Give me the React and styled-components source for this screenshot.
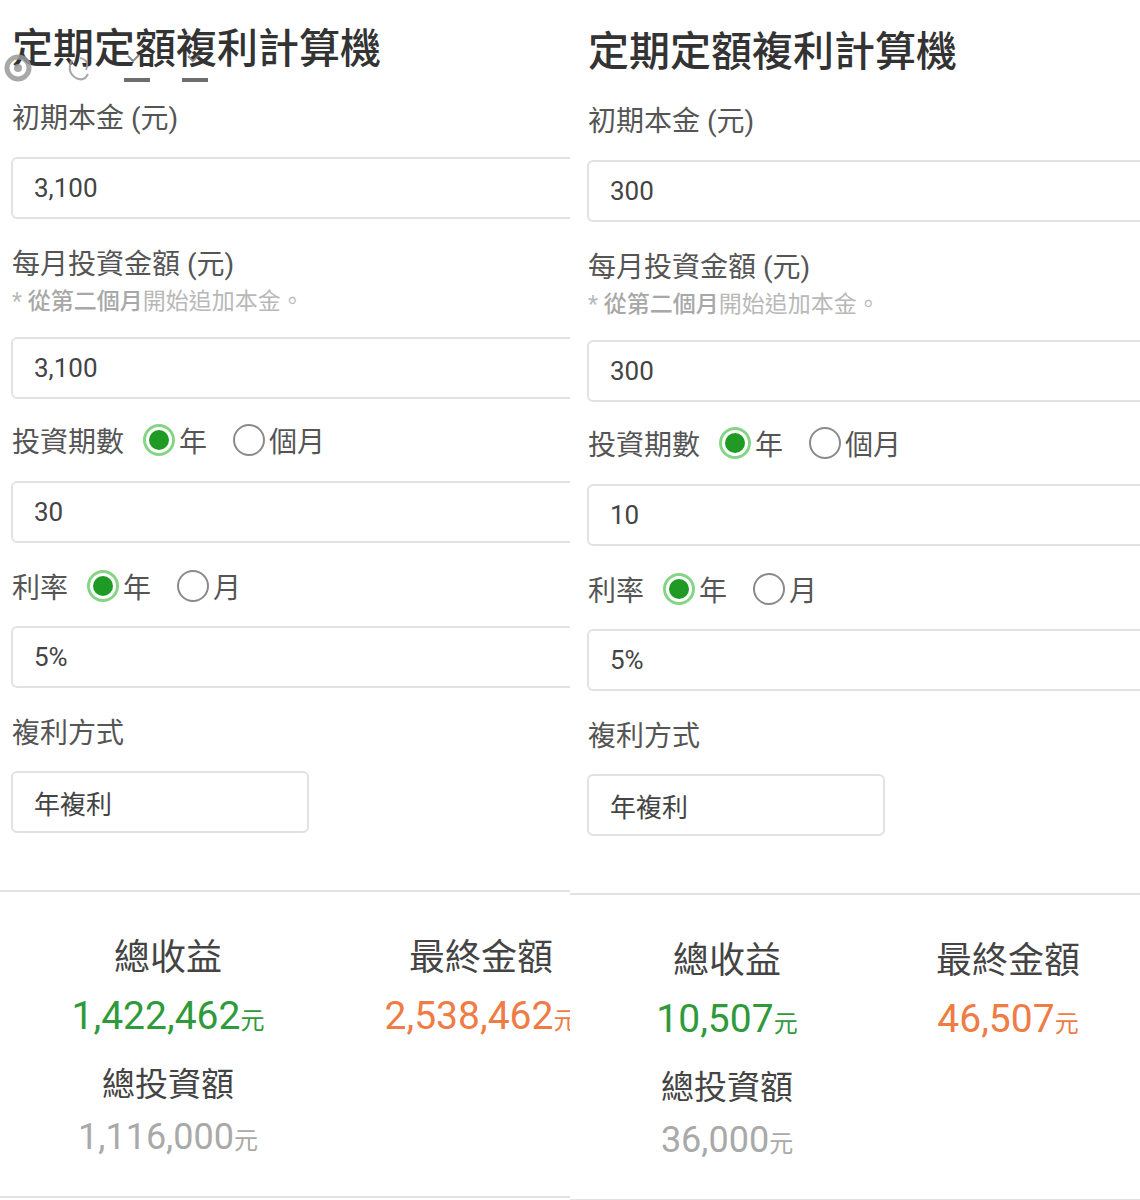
import React from "react";
import styled, { createGlobalStyle } from "styled-components";

const GlobalStyle = createGlobalStyle`
  html, body {
    margin: 0;
    padding: 0;
    background: #fff;
  }
  body {
    font-family: Roboto, "Noto Sans CJK TC", "Noto Sans", sans-serif;
    color: #444;
  }
`;

const panels = [
  {
    id: "a",
    shift: 0,
    inset: 11,
    principal: "3,100",
    monthly: "3,100",
    periods: "30",
    rate: "5%",
    gain: "1,422,462",
    final: "2,538,462",
    invested: "1,116,000",
    cols: "336px 290px",
    overlay: true,
  },
  {
    id: "b",
    shift: 3,
    inset: 17,
    principal: "300",
    monthly: "300",
    periods: "10",
    rate: "5%",
    gain: "10,507",
    final: "46,507",
    invested: "36,000",
    cols: "314px 248px",
    overlay: false,
  },
];

const Calculator = ({ data }) => (
  <Panel $shift={data.shift}>
    {data.overlay && (
      <Overlay width="220" height="40" viewBox="0 0 220 40">
        <circle cx="16" cy="14" r="11" fill="none" stroke="#9a9a9a" strokeWidth="5" />
        <circle cx="16" cy="14" r="4" fill="#9a9a9a" />
        <path d="M70 6 q-6 12 4 18 q8 4 12 -4 M78 4 q10 2 6 12" fill="none" stroke="#9a9a9a" strokeWidth="2" />
        <path d="M126 2 l5 5 l6 -6" fill="none" stroke="#777" strokeWidth="2" />
        <path d="M186 2 l5 5 l6 -6" fill="none" stroke="#777" strokeWidth="2" />
        <rect x="122" y="24" width="26" height="4" fill="#555" />
        <rect x="180" y="24" width="26" height="4" fill="#555" />
      </Overlay>
    )}
    <Form $inset={data.inset}>
      <Title>定期定額複利計算機</Title>

      <Label $gap={28}>初期本金 (元)</Label>
      <Field $gap={20} readOnly value={data.principal} />

      <Label $gap={28}>每月投資金額 (元)</Label>
      <Hint>
        * <strong>從第二個月</strong>開始追加本金。
      </Hint>
      <Field $gap={21} readOnly value={data.monthly} />

      <RadioRow $gap={23}>
        <span>投資期數</span>
        <Option $first>
          <Radio $checked />年
        </Option>
        <Option>
          <Radio />個月
        </Option>
      </RadioRow>
      <Field $gap={23} readOnly value={data.periods} />

      <RadioRow $gap={25}>
        <span>利率</span>
        <Option $first>
          <Radio $checked />年
        </Option>
        <Option>
          <Radio />月
        </Option>
      </RadioRow>
      <Field $gap={22} readOnly value={data.rate} />

      <Label $gap={28}>複利方式</Label>
      <Select>年複利</Select>
    </Form>

    <Divider $gap={57} />

    <Results $cols={data.cols}>
      <Stat>
        <StatTitle>總收益</StatTitle>
        <StatValue $color="#2e9a3a">
          {data.gain}
          <Unit>元</Unit>
        </StatValue>
        <StatTitle $gap={21} $size={33}>總投資額</StatTitle>
        <StatValue $color="#a9a9a9" $gap={10} $size={36}>
          {data.invested}
          <Unit>元</Unit>
        </StatValue>
      </Stat>
      <Stat>
        <StatTitle>最終金額</StatTitle>
        <StatValue $color="#ef7b45">
          {data.final}
          <Unit>元</Unit>
        </StatValue>
      </Stat>
    </Results>

    <Divider $gap={33} />
  </Panel>
);

export default function App() {
  return (
    <>
      <GlobalStyle />
      <Page>
        {panels.map((p) => (
          <Calculator key={p.id} data={p} />
        ))}
      </Page>
    </>
  );
}

const Page = styled.div`
  display: flex;
  width: 1140px;
  height: 1200px;
  overflow: hidden;
`;

const Panel = styled.section`
  position: relative;
  width: 570px;
  flex: 0 0 570px;
  height: 1200px;
  overflow: hidden;
  padding-top: ${(p) => 25 + p.$shift}px;
  box-sizing: border-box;
`;

const Overlay = styled.svg`
  position: absolute;
  left: 2px;
  top: 54px;
  opacity: 0.85;
`;

const Form = styled.div`
  display: flex;
  flex-direction: column;
  align-items: flex-start;
  padding-left: ${(p) => p.$inset}px;
`;

const Title = styled.h1`
  margin: 0 0 0 1px;
  font-size: 41px;
  line-height: 48px;
  font-weight: 500;
  color: #333;
  white-space: nowrap;
`;

const Label = styled.div`
  margin: ${(p) => p.$gap}px 0 0 1px;
  font-size: 28px;
  line-height: 36px;
  color: #555;
  white-space: nowrap;
`;

const Hint = styled.div`
  margin: 5px 0 0 1px;
  font-size: 23px;
  line-height: 28px;
  color: #b8b8b8;
  white-space: nowrap;
  strong {
    color: #a8a8a8;
    font-weight: 500;
  }
`;

const Field = styled.input`
  margin-top: ${(p) => p.$gap}px;
  width: 720px;
  height: 62px;
  box-sizing: border-box;
  padding: 0 21px;
  border: 2px solid #e2e2e2;
  border-radius: 6px;
  background: #fff;
  font-family: Roboto, "Noto Sans CJK TC", sans-serif;
  font-size: 26px;
  color: #444;
  outline: none;
`;

const Select = styled.div`
  margin-top: 19px;
  width: 298px;
  height: 62px;
  box-sizing: border-box;
  display: flex;
  align-items: center;
  padding: 0 21px;
  border: 2px solid #e2e2e2;
  border-radius: 6px;
  font-size: 26px;
  color: #444;
`;

const RadioRow = styled.div`
  margin: ${(p) => p.$gap}px 0 0 1px;
  display: flex;
  align-items: center;
  height: 36px;
  font-size: 28px;
  color: #555;
  white-space: nowrap;
`;

const Option = styled.label`
  display: flex;
  align-items: center;
  gap: 4px;
  margin-left: ${(p) => (p.$first ? 19 : 26)}px;
`;

const Radio = styled.span`
  width: 32px;
  height: 32px;
  box-sizing: border-box;
  border-radius: 50%;
  border: ${(p) => (p.$checked ? "3px solid #86d486" : "2px solid #8a8a8a")};
  position: relative;
  &::after {
    content: "";
    display: ${(p) => (p.$checked ? "block" : "none")};
    position: absolute;
    inset: 3px;
    border-radius: 50%;
    background: #1f9a24;
  }
`;

const Divider = styled.hr`
  margin: ${(p) => p.$gap}px 0 0;
  border: 0;
  height: 2px;
  width: 100%;
  background: #e2e2e2;
`;

const Results = styled.div`
  display: grid;
  grid-template-columns: ${(p) => p.$cols};
  padding-top: 44px;
`;

const Stat = styled.div`
  display: flex;
  flex-direction: column;
  align-items: center;
`;

const StatTitle = styled.div`
  margin-top: ${(p) => p.$gap ?? 0}px;
  font-size: ${(p) => p.$size ?? 36}px;
  line-height: ${(p) => (p.$size ?? 36) + 8}px;
  color: #444;
  white-space: nowrap;
`;

const StatValue = styled.div`
  margin-top: ${(p) => p.$gap ?? 14}px;
  font-size: ${(p) => p.$size ?? 39}px;
  line-height: 44px;
  color: ${(p) => p.$color};
  white-space: nowrap;
`;

const Unit = styled.span`
  font-size: 24px;
`;
